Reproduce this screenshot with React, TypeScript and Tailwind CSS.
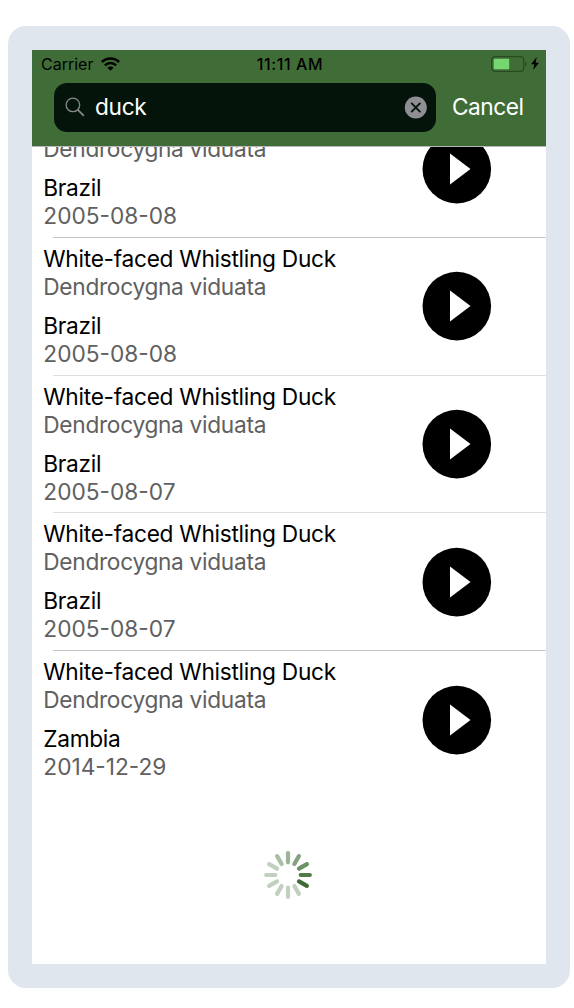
type Recording = { name: string; species: string; country: string; date: string };

const duck = { name: 'White-faced Whistling Duck', species: 'Dendrocygna viduata' };

const recordings: Recording[] = [
  { ...duck, country: 'Brazil', date: '2005-08-08' },
  { ...duck, country: 'Brazil', date: '2005-08-08' },
  { ...duck, country: 'Brazil', date: '2005-08-07' },
  { ...duck, country: 'Brazil', date: '2005-08-07' },
  { ...duck, country: 'Zambia', date: '2014-12-29' },
];

const separators = ['bg-[#c8c7cc]', 'bg-[#dedee0]', 'bg-[#dedee0]', 'bg-[#c8c7cc]', 'bg-transparent'];

// Clockwise from twelve o'clock
const spokes = ['#9bb496', '#85a37e', '#6c9165', '#517b48', '#3f6c35', '#c1d0bf', '#c1d0bf', '#c1d0bf', '#c1d0bf', '#c1d0bf', '#c1d0bf', '#a8bfa4'];

function StatusBar() {
  return (
    <div className="flex h-[29px] items-center pr-[7px] pb-0.5 pl-[9px] text-[16px] text-black">
      <div className="flex flex-1 items-center gap-[8px]">
        <span>Carrier</span>
        <svg width="19" height="14" viewBox="0 0 19 14" fill="none" stroke="currentColor" strokeWidth="2.6">
          <path d="M.9 5a12.3 12.3 0 0 1 17.2 0" />
          <path d="M3.9 8.3a7.9 7.9 0 0 1 11.2 0" />
          <path d="M9.5 13.8 6.4 10.8a4.4 4.4 0 0 1 6.2 0Z" fill="currentColor" stroke="none" />
        </svg>
      </div>
      <span className="font-medium tracking-[0.6px] whitespace-nowrap">11:11 AM</span>
      <div className="flex flex-1 items-center justify-end gap-[4px]">
        <svg width="36" height="16" viewBox="0 0 36 16">
          <rect x=".7" y=".7" width="32" height="14.6" rx="3" fill="none" stroke="#294b22" strokeWidth="1.2" />
          <rect x="2.7" y="2.8" width="15.5" height="10.4" rx="1" fill="#76d672" />
          <path d="M34.2 5.7q1.6.6 1.6 2.3t-1.6 2.3Z" fill="#294b22" />
        </svg>
        <svg width="8" height="13" viewBox="0 0 8 13" fill="currentColor">
          <path d="M5.7 0 0 7.2h3.3L2.2 13 8 5.7H4.7Z" />
        </svg>
      </div>
    </div>
  );
}

function SearchBar() {
  return (
    <div className="flex pt-1 pl-[22px]">
      <div className="flex h-[49px] w-[382px] items-center rounded-[13px] bg-[#04140a] pr-[9px] pl-[11px]">
        <svg className="mb-px" width="20" height="20" viewBox="0 0 21 21" fill="none" stroke="#85888a" strokeWidth="1.4" strokeLinecap="round">
          <circle cx="8.3" cy="8.3" r="7.1" />
          <path d="m13.5 13.5 5.8 5.8" strokeWidth="1.9" />
        </svg>
        <span className="ml-[10px] flex-1 pb-0.5 text-[22.7px] leading-[34px] tracking-[-0.3px] text-white">duck</span>
        <svg width="23" height="23" viewBox="0 0 23 23">
          <circle cx="11.8" cy="11.5" r="11" fill="#8f8e93" />
          <path d="m7.7 7.4 8.2 8.2m0-8.2-8.2 8.2" stroke="#04140a" strokeWidth="1.9" strokeLinecap="round" />
        </svg>
      </div>
      <span className="ml-4 pt-[7px] text-[22.7px] leading-[34px] tracking-[-0.5px] text-white">Cancel</span>
    </div>
  );
}

function PlayButton() {
  return (
    <button className="mr-[54px]" aria-label="Play">
      <svg width="70" height="70" viewBox="0 0 70 70">
        <circle cx="34.8" cy="35.1" r="34.3" />
        <path d="M28 19.6v31l20.5-15.5Z" fill="#fff" />
      </svg>
    </button>
  );
}

function Row({ item, line }: { item: Recording; line: string }) {
  return (
    <li className="flex h-[137.7px] shrink-0 flex-col">
      <div className="flex flex-1 items-center justify-between">
        <div className="pl-[11.3px] text-[22.7px] leading-[28px] text-black">
          <p className="tracking-[-0.28px]">{item.name}</p>
          <p className="tracking-[-0.3px] text-[#606060]">{item.species}</p>
          <p className="mt-[11px] tracking-[-0.3px]">{item.country}</p>
          <p className="text-[#606060]">{item.date}</p>
        </div>
        <PlayButton />
      </div>
      <div className={`ml-[21px] h-px ${line}`} />
    </li>
  );
}

function Spinner() {
  return (
    <svg className="ml-[231px]" width="50" height="50" viewBox="-25 -25 50 50">
      {spokes.map((color, i) => (
        <path key={i} d="M0-12.7V-21.8" stroke={color} strokeWidth="4.2" strokeLinecap="round" transform={`rotate(${i * 30})`} />
      ))}
    </svg>
  );
}

export default function App() {
  return (
    <div className="h-[1008px] w-[574px] overflow-hidden bg-white pt-[26px] pl-2 font-['Inter',sans-serif]">
      <div className="h-[962px] w-[562px] rounded-[18px] bg-[#dfe6ee] p-6">
        <div className="flex h-[914px] w-[514px] flex-col overflow-hidden bg-white">
          <header className="h-24 shrink-0 bg-[#406d37]">
            <StatusBar />
            <SearchBar />
          </header>
          <div className="min-h-0 flex-1 overflow-hidden border-t border-[#b8b8b8]">
            <ul className="-mt-[46.6px] flex flex-col">
              {recordings.map((item, i) => (
                <Row key={i} item={item} line={separators[i]} />
              ))}
            </ul>
            <div className="pt-[61px]">
              <Spinner />
            </div>
          </div>
        </div>
      </div>
    </div>
  );
}
